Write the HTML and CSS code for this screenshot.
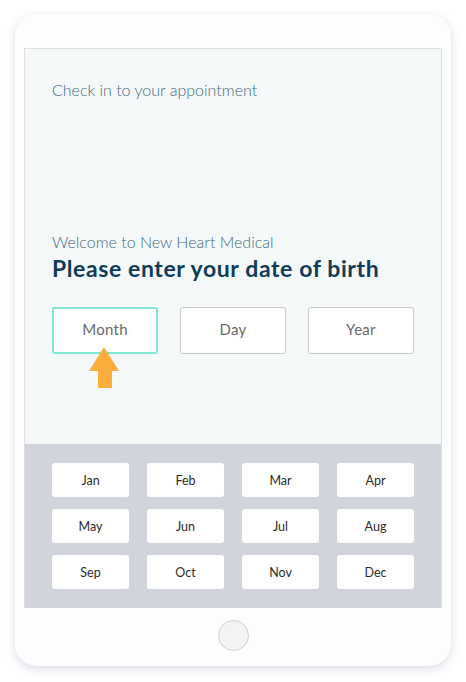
FILE: index.html
```html
<!DOCTYPE html>
<html lang="en">
<head>
  <meta charset="UTF-8" />
  <meta name="viewport" content="width=device-width, initial-scale=1.0" />
  <title>Check in</title>
  <link rel="stylesheet" href="styles.css">
</head>
<body>
  <div class="device">
    <div class="screen">
      <div class="content">
        <p class="intro">Check in to your appointment</p>
        <p class="welcome">Welcome to New Heart Medical</p>
        <h1 class="title">Please enter your date of birth</h1>
        <div class="fields">
          <div class="field active">Month
            <svg class="arrow" width="32" height="42" viewBox="0 0 32 42">
              <path d="M15 0 L30 24 L23 24 L23 41 L9 41 L9 24 L0 24 Z" fill="#fcae3d" />
            </svg>
          </div>
          <div class="field">Day</div>
          <div class="field">Year</div>
        </div>
      </div>
      <div class="keys">
        <button>Jan</button>
        <button>Feb</button>
        <button>Mar</button>
        <button>Apr</button>
        <button>May</button>
        <button>Jun</button>
        <button>Jul</button>
        <button>Aug</button>
        <button>Sep</button>
        <button>Oct</button>
        <button>Nov</button>
        <button>Dec</button>
      </div>
    </div>
    <div class="home"></div>
  </div>
</body>
</html>
```

FILE: styles.css
```css
:root {
  --frame: #fdfdfd;
  --screen: #f5f8f9;
  --keyboard: #d1d4db;
  --ink: #0f3d58;
  --soft: #3f6b82;
  --accent: #80e8d2;
}

* {
  margin: 0;
  padding: 0;
  box-sizing: border-box;
  font-family: Lato, 'Open Sans', sans-serif;
}

body {
  background: #ffffff;
  width: 466px;
  height: 682px;
  overflow: hidden;
}

.device {
  width: 436px;
  height: 652px;
  margin: 14px 0 0 15px;
  padding: 34px 9px 0;
  background: var(--frame);
  border-radius: 22px;
  box-shadow: 0 3px 10px rgba(90, 90, 150, 0.22);
}

.screen {
  border: 1px solid #dddfe0;
  border-bottom: none;
  background: var(--screen);
}

.content {
  height: 395px;
  padding: 31px 27px 0;
}

.intro {
  font-size: 16px;
  font-weight: 300;
  line-height: 20px;
  color: var(--soft);
}

.welcome {
  margin-top: 132px;
  font-size: 16px;
  font-weight: 300;
  line-height: 20px;
  color: var(--soft);
}

.title {
  margin-top: 2px;
  font-size: 23px;
  font-weight: 700;
  line-height: 29px;
  letter-spacing: 0.6px;
  color: var(--ink);
}

.fields {
  display: flex;
  gap: 22px;
  margin-top: 24px;
}

.field {
  position: relative;
  width: 106px;
  height: 47px;
  display: flex;
  align-items: center;
  justify-content: center;
  padding-bottom: 3px;
  background: #ffffff;
  border: 1px solid #c9c9c9;
  border-radius: 3px;
  font-size: 15px;
  letter-spacing: 0.3px;
  color: #6a6a6a;
}

.field.active {
  border: 2px solid var(--accent);
}

.arrow {
  position: absolute;
  left: 35px;
  top: 38px;
}

.keys {
  display: grid;
  grid-template-columns: repeat(4, 77px);
  grid-auto-rows: 34px;
  column-gap: 18px;
  row-gap: 12px;
  padding: 19px 27px 19px;
  background: var(--keyboard);
}

.keys button {
  border: none;
  border-radius: 3px;
  background: #ffffff;
  font-size: 12.5px;
  font-weight: 400;
  color: #2b2b2b;
}

.home {
  width: 31px;
  height: 31px;
  margin: 12px auto 0;
  border-radius: 50%;
  background: #f3f3f4;
  border: 1px solid #cfcfcf;
}
```
